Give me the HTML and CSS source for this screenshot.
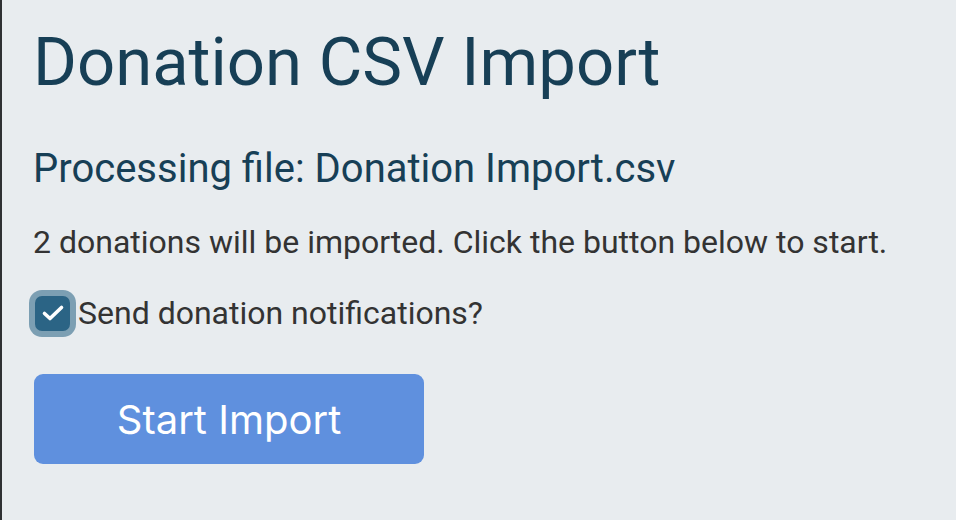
FILE: index.html
```html
<!DOCTYPE html>
<html>
<head>
    <title>Donation CSV Import</title>
    <meta name="viewport" content="width=device-width, initial-scale=1.0">
    <link rel="stylesheet" href="styles.css">
</head>
<body>
    <div class="page">
        <h1 class="title">Donation CSV Import</h1>
        <h2 class="subtitle">Processing file: Donation Import.csv</h2>
        <p class="summary">2 donations will be imported. Click the button below to start.</p>
        <label class="check-row">
            <span class="check-box">
                <svg width="26" height="26" viewBox="0 0 26 26">
                    <path d="M4.5 13.5 L10 18.5 L21.5 7.5" fill="none" stroke="#ffffff" stroke-width="3.6" stroke-linecap="round" stroke-linejoin="round"/>
                </svg>
            </span>
            Send donation notifications?
        </label>
        <button class="start-button">Start Import</button>
    </div>
</body>
</html>
```

FILE: styles.css
```css
html, body {
    margin: 0;
    padding: 0;
}
body {
    background-color: #e8ecef;
    font-family: Roboto, "Liberation Sans", sans-serif;
    color: #333333;
}
.page {
    border-left: 2px solid #2f3133;
    min-height: 100vh;
    box-sizing: border-box;
    padding: 22px 0 0 31px;
}
.title {
    margin: 0;
    font-size: 67px;
    line-height: 80px;
    font-weight: 400;
    color: #173f56;
}
.subtitle {
    margin: 43px 0 0 0;
    font-size: 40px;
    line-height: 48px;
    font-weight: 400;
    color: #173f56;
}
.summary {
    margin: 29px 0 0 0;
    font-size: 32px;
    line-height: 40px;
}
.check-row {
    display: flex;
    align-items: center;
    margin-top: 31px;
    font-size: 32px;
    line-height: 40px;
}
.check-box {
    display: flex;
    align-items: center;
    justify-content: center;
    width: 35px;
    height: 35px;
    box-sizing: border-box;
    margin-left: 2px;
    margin-right: 8px;
    background-color: #2b6485;
    border-radius: 7px;
    box-shadow: 0 0 0 6px #7c9fb3;
}
.start-button {
    display: block;
    margin-top: 41px;
    margin-left: 1px;
    width: 390px;
    height: 90px;
    border: none;
    border-radius: 9px;
    background-color: #5f90de;
    color: #ffffff;
    font-family: Inter, Roboto, sans-serif;
    font-size: 40px;
}
```
